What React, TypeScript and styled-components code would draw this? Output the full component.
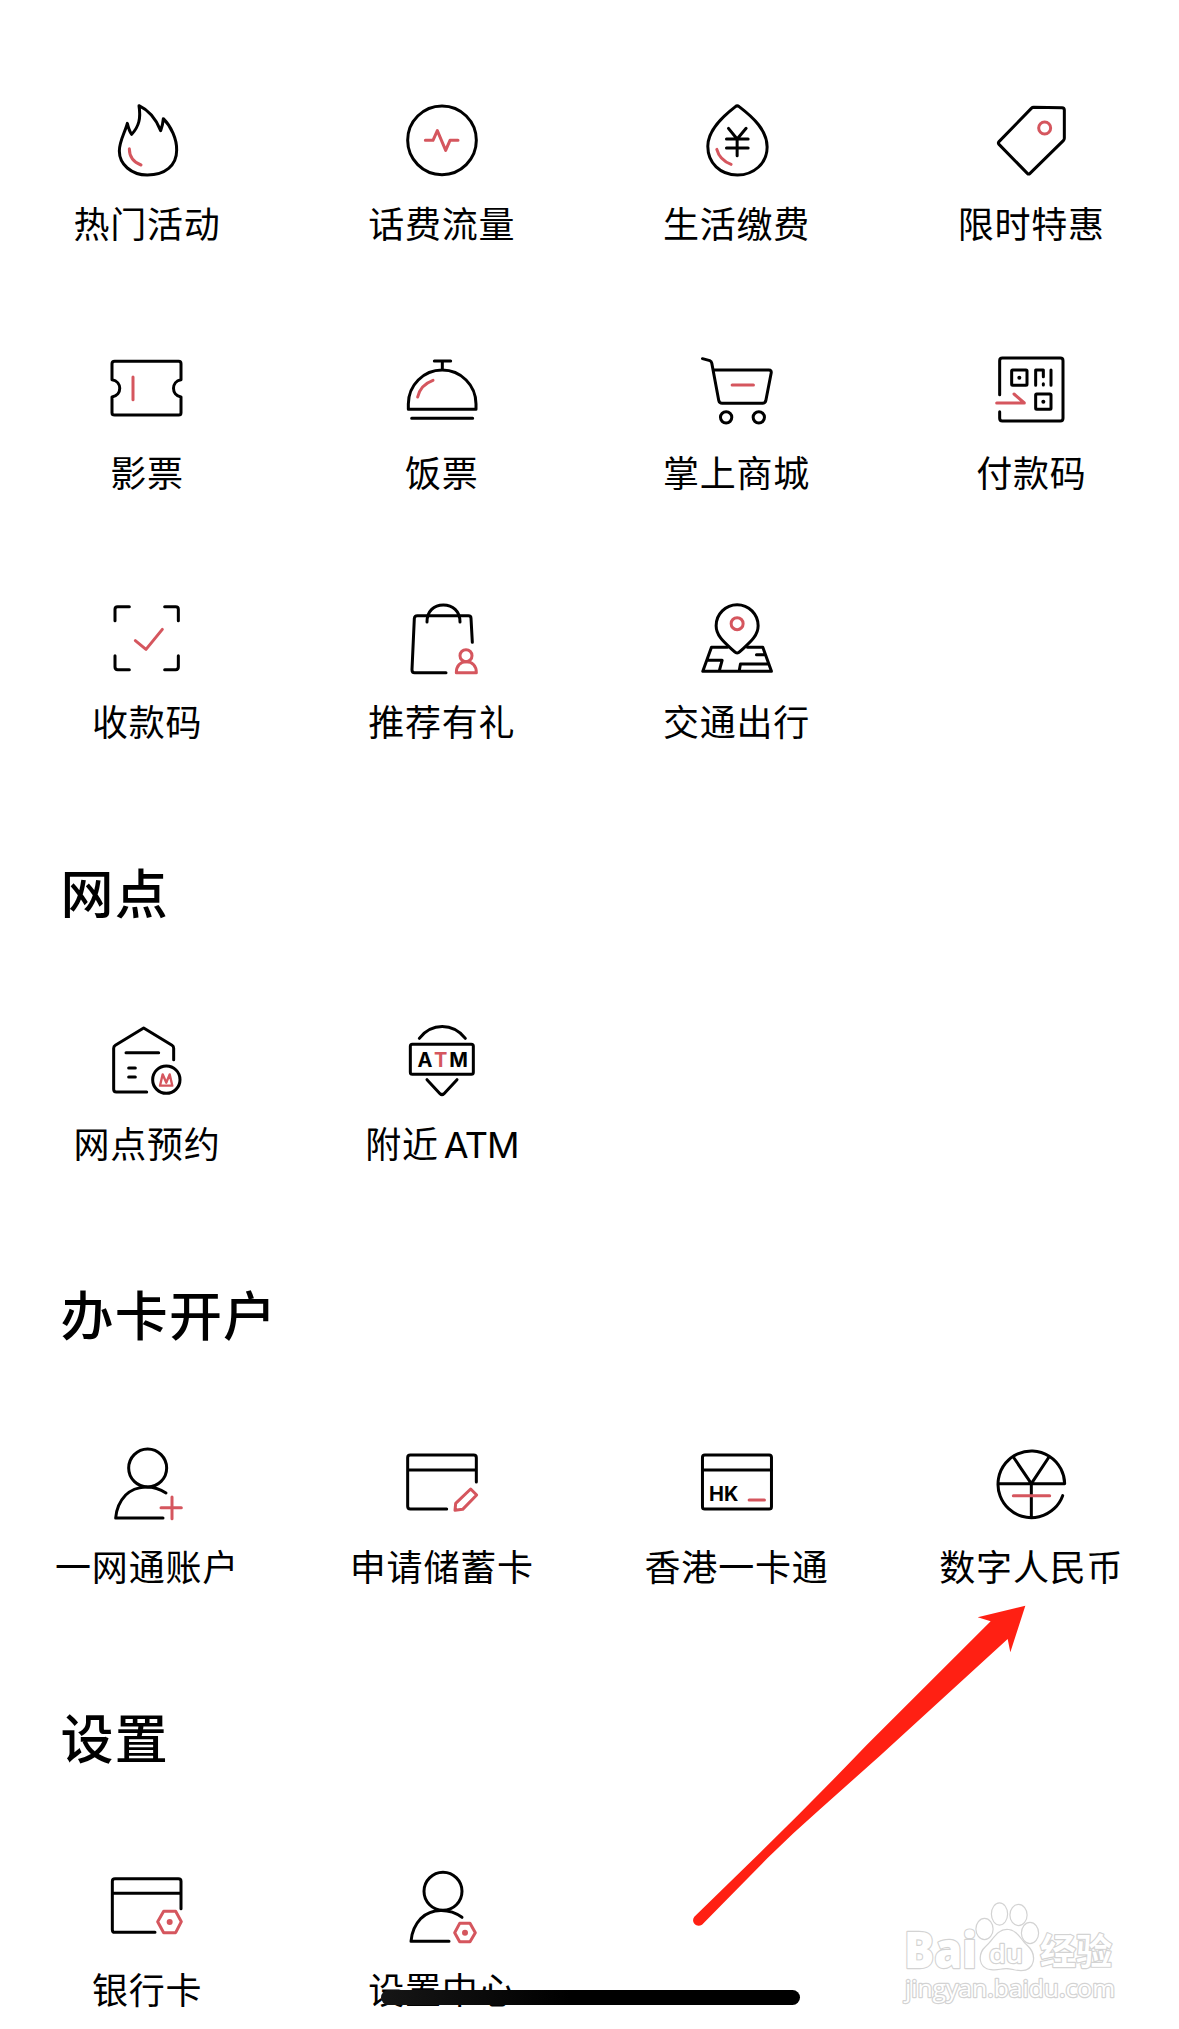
import React from 'react';
import styled, { createGlobalStyle } from 'styled-components';

const RED = '#d5565e';

const GlobalStyle = createGlobalStyle`
  body {
    margin: 0;
    background: #fff;
  }
`;

const Page = styled.main`
  position: relative;
  box-sizing: border-box;
  width: 1179px;
  height: 2029px;
  padding-top: 98.5px;
  overflow: hidden;
  background: #fff;
  color: #000;
  font-family: Inter, 'Noto Sans CJK SC', sans-serif;
`;

const Section = styled.section`
  margin-bottom: 110px;
`;

const Heading = styled.h2`
  margin: 0 0 88.8px;
  padding-left: 60.5px;
  font-size: 53px;
  line-height: 72px;
  font-weight: 500;
  letter-spacing: 1.2px;
`;

const Grid = styled.div`
  display: grid;
  grid-template-columns: repeat(4, 1fr);
  row-gap: 97.05px;
`;

const Tile = styled.div`
  display: flex;
  flex-direction: column;
  align-items: center;
`;

const Glyph = styled.svg`
  display: block;
  width: 84px;
  height: 84px;
  fill: none;
  stroke: #000;
  stroke-width: 9;
  stroke-linecap: round;
  stroke-linejoin: round;

  .accent {
    stroke: ${RED};
  }
  .dot {
    fill: #000;
    stroke: none;
  }
  .accent-dot {
    fill: ${RED};
    stroke: none;
  }
`;

const GlyphText = styled.text`
  font-family: Inter, sans-serif;
  font-weight: 700;
  font-size: 60px;
  stroke: none;
  fill: #000;
  text-anchor: middle;

  .red {
    fill: ${RED};
  }
`;

const Label = styled.div`
  margin-top: 16px;
  padding-right: 0.6px;
  font-size: 36px;
  line-height: 52px;
  font-weight: 400;
  letter-spacing: 0.8px;
  white-space: nowrap;
`;

const Latin = styled.span`
  margin-left: 5px;
  letter-spacing: -1px;
`;

const HomeIndicator = styled.div`
  position: absolute;
  left: 381px;
  top: 1990px;
  width: 419px;
  height: 15px;
  border-radius: 8px;
  background: linear-gradient(90deg, #161616, #000 45%);
`;

const Arrow = styled.svg`
  position: absolute;
  left: 680px;
  top: 1590px;
  width: 360px;
  height: 350px;
  fill: #ff2013;
`;

const Watermark = styled.svg`
  position: absolute;
  left: 890px;
  top: 1890px;
  width: 240px;
  height: 130px;
  fill: #fff;
  stroke: #d3d3d3;
  stroke-width: 2.4;
  stroke-linejoin: round;
  paint-order: stroke;
  font-family: 'Open Sans', 'Noto Sans CJK SC', sans-serif;
`;

type Item = { label: React.ReactNode; box: string; art: React.ReactNode };

const services: Item[] = [
  {
    label: '热门活动',
    box: '166 26',
    art: (
      <>
        <path d="M268 46C298 60 320 88 333 121C338 108 340 98 341 85C364 108 382 146 381 180C381 226 346 254 293 254C245 254 209 222 209 182C209 152 226 126 233 99C236 112 240 124 246 132C268 108 274 84 268 46Z" />
        <path className="accent" d="M239 175C239 200 254 216 274 224" />
      </>
    ),
  },
  {
    label: '话费流量',
    box: '1050 26',
    art: (
      <>
        <circle cx="1176" cy="150" r="103" />
        <path className="accent" d="M1126 150H1149L1162 121L1187 180L1200 150H1224" />
      </>
    ),
  },
  {
    label: '生活缴费',
    box: '164.6 26',
    art: (
      <>
        <path d="M286 49Q291 44 297 49C340 82 381 120 381 170C381 220 340 254 292 254C240 254 203 218 203 168C203 120 246 80 286 49Z" />
        <path d="M265 114L291 146L318 114M259 146H324M259 173H324M291 146V196" />
        <path className="accent" d="M230 177C236 200 252 214 273 222" />
      </>
    ),
  },
  {
    label: '限时特惠',
    box: '1049 26',
    art: (
      <>
        <path d="M1180 51L1265 52Q1272 52 1272 59V144Q1272 148 1269 151L1169 249Q1165 253 1161 249L1076 162Q1072 158 1076 154L1173 54Q1176 51 1180 51Z" />
        <circle className="accent" cx="1213" cy="113" r="18" />
      </>
    ),
  },
  {
    label: '影票',
    box: '166 22',
    art: (
      <>
        <path d="M195 62H387Q394 62 394 69V117C364 122 364 164 394 169V216Q394 223 387 223H195Q187 223 187 216V169C218 164 218 122 187 117V69Q187 62 195 62Z" />
        <path className="accent" d="M250 109V177" />
      </>
    ),
  },
  {
    label: '饭票',
    box: '1050 22',
    art: (
      <>
        <path d="M1153 61H1202M1177 61V86M1075 206V190A101.500 102 0 0 1 1278 190V206ZM1085 233H1268" />
        <path className="accent" d="M1103 169C1108 146 1124 128 1149 119" />
      </>
    ),
  },
  {
    label: '掌上商城',
    box: '164.6 22',
    art: (
      <>
        <path d="M187 54L209 60Q214 62 215 68L236 180Q238 188 246 188H367Q375 188 377 180L393 98Q395 88 386 88H221" />
        <circle cx="258" cy="230" r="17" />
        <circle cx="356" cy="230" r="17" />
        <path className="accent" d="M276 133H340" />
      </>
    ),
  },
  {
    label: '付款码',
    box: '1049 22',
    art: (
      <>
        <path d="M1078 162V60Q1078 52 1086 52H1260Q1268 52 1268 60V233Q1268 241 1260 241H1086Q1078 241 1078 233V213" />
        <rect x="1114" y="88" width="46" height="46" rx="3" />
        <rect x="1186" y="160" width="46" height="46" rx="3" />
        <circle className="dot" cx="1137" cy="111" r="6" />
        <circle className="dot" cx="1209" cy="183" r="6" />
        <path d="M1186 134V88H1209V108M1209 129V133M1232 88V134" />
        <path className="accent" d="M1069 187H1152L1121 160" />
      </>
    ),
  },
  {
    label: '收款码',
    box: '166 20',
    art: (
      <>
        <path d="M196 91V57Q196 49 204 49H239M345 49H378Q386 49 386 57V91M386 196V230Q386 238 378 238H345M239 238H204Q196 238 196 230V196" />
        <path className="accent" d="M257 151L289 177L338 117" />
      </>
    ),
  },
  {
    label: '推荐有礼',
    box: '1050 20',
    art: (
      <>
        <path d="M1188 247H1094Q1086 247 1086 238L1093 84Q1094 76 1102 76H1255Q1263 76 1263 84L1267 156" />
        <path d="M1131 95C1131 62 1152 44 1180 44C1208 44 1230 62 1230 95" />
        <circle className="accent" cx="1248" cy="196" r="18" />
        <path className="accent" d="M1219 247C1219 226 1232 214 1248 214C1266 214 1279 226 1279 247Z" />
      </>
    ),
  },
  {
    label: '交通出行',
    box: '164.6 20',
    art: (
      <>
        <path d="M291 188Q287 188 283 184C255 158 228 138 228 106A63 63 0 0 1 354 106C354 138 327 158 299 184Q295 188 291 188Z" />
        <path d="M262 171H214L188 243H394L368 171H322M202 210H246L237 243M386 221H301L297 243M349 193H374" />
        <circle className="accent" cx="291" cy="100" r="18" />
      </>
    ),
  },
];

const branches: Item[] = [
  {
    label: '网点预约',
    box: '166 27',
    art: (
      <>
        <path d="M291 246H200Q192 246 192 238V115Q192 109 197 106L282 54L367 106Q372 109 372 115V149M229 128H327M237 174H257M237 201H257" />
        <circle cx="350" cy="209" r="41" />
        <path className="accent" strokeWidth="7" d="M331 227L339 193L350 218L360 193L368 227Z" />
      </>
    ),
  },
  {
    label: (
      <>
        附近<Latin>ATM</Latin>
      </>
    ),
    box: '1050 27',
    art: (
      <>
        <path d="M1108 85C1145 38 1208 38 1246 85M1131 209L1170 251Q1176 257 1182 251L1221 209" />
        <rect x="1081" y="103" width="189" height="90" rx="6" />
        <GlyphText y="169.5">
          <tspan x="1125">A</tspan>
          <tspan x="1172" className="red">T</tspan>
          <tspan x="1226">M</tspan>
        </GlyphText>
      </>
    ),
  },
];

const accounts: Item[] = [
  {
    label: '一网通账户',
    box: '166 37',
    art: (
      <>
        <circle cx="294" cy="115" r="57" />
        <path d="M349 190C310 165 260 166 228 196C208 217 200 240 198 265H340" />
        <path className="accent" d="M334 234H395M367 202V267" />
      </>
    ),
  },
  {
    label: '申请储蓄卡',
    box: '1050 37',
    art: (
      <>
        <path d="M1190 238H1081Q1073 238 1073 230V84Q1073 76 1081 76H1271Q1279 76 1279 84V157M1073 121H1279" />
        <path className="accent" d="M1262 178L1280 196L1238 239L1215 242L1217 221Z" />
      </>
    ),
  },
  {
    label: '香港一卡通',
    box: '164.6 37',
    art: (
      <>
        <rect x="187" y="76" width="207" height="162" rx="7" />
        <path d="M187 121H394" />
        <GlyphText y="214">
          <tspan x="229">H</tspan>
          <tspan x="273">K</tspan>
        </GlyphText>
        <path className="accent" d="M327 211H373" />
      </>
    ),
  },
  {
    label: '数字人民币',
    box: '1049 37',
    art: (
      <>
        <path d="M1267 198A100 100 0 1 1 1273 162H1074M1119 82L1173 162L1226 82M1173 162V260" />
        <path className="accent" d="M1119 198H1228" />
      </>
    ),
  },
];

const settings: Item[] = [
  {
    label: '银行卡',
    box: '166 45',
    art: (
      <>
        <path d="M316 247H196Q188 247 188 239V94Q188 86 196 86H386Q394 86 394 94V176M188 130H394" />
        <path className="accent" d="M342 184H378L395 215L378 248H342L324 215Z" />
        <circle className="accent-dot" cx="360" cy="216" r="9" />
      </>
    ),
  },
  {
    label: '设置中心',
    box: '1050 45',
    art: (
      <>
        <circle cx="1179" cy="124" r="57" />
        <path d="M1236 202C1197 174 1145 175 1113 205C1093 226 1085 248 1083 274H1197" />
        <path className="accent" d="M1229 220H1260L1276 248L1260 275H1229L1214 248Z" />
        <circle className="accent-dot" cx="1245" cy="248" r="9" />
      </>
    ),
  },
];

function MenuSection({ title, items }: { title?: string; items: Item[] }) {
  return (
    <Section>
      {title && <Heading>{title}</Heading>}
      <Grid>
        {items.map((item) => (
          <Tile key={item.box}>
            <Glyph viewBox={`${item.box} 252 252`}>{item.art}</Glyph>
            <Label>{item.label}</Label>
          </Tile>
        ))}
      </Grid>
    </Section>
  );
}

export default function App() {
  return (
    <>
      <GlobalStyle />
      <Page>
        <MenuSection items={services} />
        <MenuSection title="网点" items={branches} />
        <MenuSection title="办卡开户" items={accounts} />
        <MenuSection title="设置" items={settings} />
        <HomeIndicator />
        <Arrow viewBox="0 0 1080 1050">
          <path d="M1036 47L893 82L932 94L560 465Q400 632 240 788L43 980C31 997 50 1015 66 1004L262 805Q340 728 420 658L600 497L983 147L991 187Z" />
        </Arrow>
        <Watermark viewBox="0 0 240 130">
          <text x="14" y="78" fontSize="49" fontWeight="800" textLength="73" lengthAdjust="spacingAndGlyphs">Bai</text>
          <ellipse cx="94.500" cy="39" rx="8" ry="10" />
          <ellipse cx="109.500" cy="24" rx="7.500" ry="10.500" />
          <ellipse cx="128.500" cy="25" rx="8" ry="10" />
          <ellipse cx="140" cy="43" rx="8" ry="10" />
          <path d="M117 40C127 40 130 50 137 56C147 65 144 80 131 80C124 80 122 78 116 78C110 78 108 80 101 79C89 78 88 64 96 57C104 50 107 40 117 40Z" />
          <text x="99" y="73" fontSize="26" fontWeight="600" textLength="34" lengthAdjust="spacingAndGlyphs">du</text>
          <text x="150" y="75" fontSize="36" fontWeight="700" textLength="72" lengthAdjust="spacingAndGlyphs">经验</text>
          <text x="15" y="106.500" fontSize="24" fontWeight="400" textLength="210" lengthAdjust="spacingAndGlyphs">jingyan.baidu.com</text>
        </Watermark>
      </Page>
    </>
  );
}
